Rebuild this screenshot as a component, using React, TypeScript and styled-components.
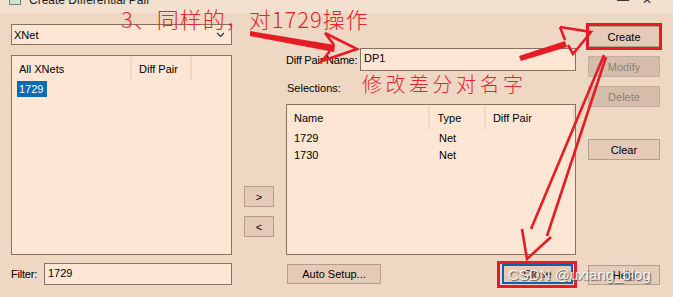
import React, { FC } from 'react'
import styled, { createGlobalStyle } from 'styled-components'

const GlobalStyle = createGlobalStyle`
  html, body {
    margin: 0;
    padding: 0;
    background: #eed8c3;
  }
  body {
    font-family: "Liberation Sans", Arial, sans-serif;
    font-size: 11px;
    color: #000;
  }
`;

const Window = styled.div`
  position: relative;
  width: 673px;
  height: 297px;
  overflow: hidden;
  background: #eed8c3;
`;

const TitleBar = styled.div`
  height: 13px;
  overflow: hidden;
  background: #f3e0cf;
`;

const TitleInner = styled.div`
  height: 22px;
  margin-top: -11px;
  display: flex;
  align-items: center;
  padding-left: 9px;
  font-size: 12px;
  color: #222;
`;

const TitleIcon = styled.span`
  width: 12px;
  height: 10px;
  border: 1px solid #6a8a6a;
  background: #cfe3cf;
  box-sizing: border-box;
  margin-right: 8px;
`;

const TitleText = styled.span`
  flex: 1;
`;

const TitleCtl = styled.span<{ $w: number }>`
  width: ${p => p.$w}px;
  text-align: center;
  font-size: 12px;
  color: #333;
`;

const Body = styled.div`
  display: flex;
  height: 284px;
  box-sizing: border-box;
  padding: 11px 0 12px 11px;
`;

const LeftCol = styled.div`
  width: 221px;
  display: flex;
  flex-direction: column;
`;

const MidCol = styled.div`
  width: 30px;
  margin-left: 12px;
  padding-top: 162px;
  display: flex;
  flex-direction: column;
  gap: 9px;
`;

const RightCol = styled.div`
  width: 290px;
  margin-left: 12px;
  display: flex;
  flex-direction: column;
`;

const ButtonCol = styled.div`
  width: 72px;
  margin-left: 12px;
  display: flex;
  flex-direction: column;
`;

const Combo = styled.div`
  height: 21px;
  box-sizing: border-box;
  border: 1px solid #857262;
  background: #fde6d3;
  display: flex;
  align-items: center;
  padding: 0 6px 0 2px;
`;

const ComboText = styled.span`
  flex: 1;
`;

const ListBox = styled.div<{ $h: number }>`
  height: ${p => p.$h}px;
  box-sizing: border-box;
  border: 1px solid #857262;
  background: #fde6d3;
  overflow: hidden;
`;

const ListHeader = styled.div`
  display: flex;
  height: 24px;
  align-items: stretch;
`;

const HeaderCell = styled.div<{ $w?: number }>`
  ${p => (p.$w ? `width: ${p.$w}px;` : 'flex: 1;')}
  box-sizing: border-box;
  padding-left: 7px;
  display: flex;
  align-items: center;
  border-right: 2px solid #ecd7c4;
  margin: 1px 0 0;
  white-space: nowrap;
`;

const ListRow = styled.div`
  display: flex;
  height: 17px;
  align-items: center;
`;

const RowCell = styled.div<{ $w?: number }>`
  ${p => (p.$w ? `width: ${p.$w}px;` : 'flex: 1;')}
  box-sizing: border-box;
  padding-left: 7px;
`;

const Selected = styled.span`
  display: inline-block;
  margin-left: -2px;
  padding: 2px 4px 2px 2px;
  background: #0a6cb4;
  color: #fff;
`;

const FieldRow = styled.div<{ $mt: number }>`
  display: flex;
  align-items: center;
  margin-top: ${p => p.$mt}px;
`;

const Label = styled.span<{ $w: number }>`
  width: ${p => p.$w}px;
  flex: none;
  white-space: nowrap;
  letter-spacing: -0.2px;
`;

const Field = styled.div<{ $h: number }>`
  flex: 1;
  height: ${p => p.$h}px;
  box-sizing: border-box;
  border: 1px solid #857262;
  background: #fde6d3;
  padding: 2px 3px 0;
  line-height: 15px;
`;

const SectionLabel = styled.div`
  margin-top: 11px;
  height: 13px;
  line-height: 13px;
  padding-left: 1px;
`;

const BottomRow = styled.div`
  display: flex;
  margin-top: 9px;
  padding-left: 1px;
`;

const Button = styled.button<{ $w?: number; $mt?: number; $focus?: boolean }>`
  width: ${p => p.$w ?? 72}px;
  height: ${p => (p.$w === 30 ? 21 : 20)}px;
  margin: ${p => p.$mt ?? 0}px 0 0;
  padding: 0;
  box-sizing: border-box;
  border: ${p => (p.$focus ? '2px solid #0a63b0' : '1px solid #b19e8e')};
  background: #e5cbb7;
  font-family: "Liberation Sans", Arial, sans-serif;
  font-size: 11px;
  font-weight: 400;
  color: #000;
  display: flex;
  align-items: center;
  justify-content: center;
  &:disabled {
    background: #d6bdab;
    border-color: #c4ae9d;
    color: #8d7d71;
  }
`;

const SideButton = styled(Button)`
  height: 21px;
`;

const CloseWrap = styled.div`
  margin-left: auto;
  margin-right: 3px;
`;

const Overlay = styled.div`
  position: absolute;
  inset: 0;
  pointer-events: none;
`;

const Note = styled.span<{ $x: number; $y: number; $size: number; $ls: number }>`
  position: absolute;
  left: ${p => p.$x}px;
  top: ${p => p.$y}px;
  font-family: "Noto Sans CJK SC", "Noto Sans", sans-serif;
  font-weight: 300;
  font-size: ${p => p.$size}px;
  letter-spacing: ${p => p.$ls}px;
  line-height: 1;
  color: #e8232b;
  white-space: nowrap;
`;

const Watermark = styled.span`
  position: absolute;
  left: 508px;
  top: 266px;
  font-family: "Liberation Sans", Arial, sans-serif;
  font-size: 15px;
  color: rgba(255, 255, 255, 0.88);
  text-shadow: 1px 1px 1px #5a5a5a;
  white-space: nowrap;
`;

const Chevron: FC = () => (
  <svg width="9" height="6" viewBox="0 0 9 6">
    <path d="M1 1 L4.5 4.5 L8 1" fill="none" stroke="#333" strokeWidth="1.2" />
  </svg>
)

const Arrows: FC = () => (
  <svg width="673" height="297" viewBox="0 0 673 297" style={{ position: 'absolute', left: 0, top: 0 }}>
    <g fill="none" stroke="#e51c24" strokeWidth="2.6" strokeLinejoin="miter">
      {/* to name field */}
      <polygon points="250,31 250,36 334,52 335,45" fill="#e51c24" stroke="none" />
      <path d="M325 33 L357 49 L322 61 L330 51 M325 33 L334 45" />
      {/* to Create */}
      <polygon points="519,56 521,61 567,47 565,41" fill="#e51c24" stroke="none" />
      <path d="M560 27 L591 32 L573 54 L568 45 M560 27 L565 40" />
      {/* Create down to Close */}
      <path d="M604 55 L531 229 M606 57 L547 236" />
      <path d="M522 229 L527 259 L551 237" />
      {/* highlight boxes */}
      <rect x="587.5" y="24.5" width="73" height="24" strokeWidth="3" />
      <rect x="498.5" y="262.5" width="77" height="24" strokeWidth="3" />
    </g>
  </svg>
)

const App: FC = () => {
  return (
    <Window>
      <GlobalStyle />
      <TitleBar>
        <TitleInner>
          <TitleIcon />
          <TitleText>Create Differential Pair</TitleText>
          <TitleCtl $w={20}>—</TitleCtl>
          <TitleCtl $w={28}>✕</TitleCtl>
          <TitleCtl $w={12}> </TitleCtl>
        </TitleInner>
      </TitleBar>
      <Body>
        <LeftCol>
          <Combo>
            <ComboText>XNet</ComboText>
            <Chevron />
          </Combo>
          <div style={{ height: 10 }} />
          <ListBox $h={200}>
            <ListHeader>
              <HeaderCell $w={120}>All XNets</HeaderCell>
              <HeaderCell $w={60}>Diff Pair</HeaderCell>
            </ListHeader>
            <ListRow>
              <RowCell $w={120}>
                <Selected>1729</Selected>
              </RowCell>
            </ListRow>
          </ListBox>
          <FieldRow $mt={8}>
            <Label $w={33}>Filter:</Label>
            <Field $h={22}>1729</Field>
          </FieldRow>
        </LeftCol>

        <MidCol>
          <Button $w={30}>&gt;</Button>
          <Button $w={30}>&lt;</Button>
        </MidCol>

        <RightCol>
          <FieldRow $mt={24}>
            <Label $w={74}>Diff Pair Name:</Label>
            <Field $h={23}>DP1</Field>
          </FieldRow>
          <SectionLabel>Selections:</SectionLabel>
          <div style={{ height: 9 }} />
          <ListBox $h={151}>
            <ListHeader>
              <HeaderCell $w={145}>Name</HeaderCell>
              <HeaderCell $w={56}>Type</HeaderCell>
              <HeaderCell $w={90}>Diff Pair</HeaderCell>
            </ListHeader>
            <ListRow>
              <RowCell $w={145}>1729</RowCell>
              <RowCell $w={56}>Net</RowCell>
            </ListRow>
            <ListRow>
              <RowCell $w={145}>1730</RowCell>
              <RowCell $w={56}>Net</RowCell>
            </ListRow>
          </ListBox>
          <BottomRow>
            <Button $w={94}>Auto Setup...</Button>
            <CloseWrap>
              <Button $w={71} $focus>Close</Button>
            </CloseWrap>
          </BottomRow>
        </RightCol>

        <ButtonCol>
          <SideButton $mt={2}>Create</SideButton>
          <SideButton $mt={9} disabled>Modify</SideButton>
          <SideButton $mt={9} disabled>Delete</SideButton>
          <SideButton $mt={32}>Clear</SideButton>
          <div style={{ flex: 1 }} />
          <Button>Help</Button>
        </ButtonCol>
      </Body>

      <Overlay>
        <Arrows />
        <Note $x={121} $y={7} $size={22} $ls={1}>3、同样的，对1729操作</Note>
        <Note $x={362} $y={74} $size={20} $ls={3.5}>修改差分对名字</Note>
        <Watermark>CSDN @uxiang_blog</Watermark>
      </Overlay>
    </Window>
  )
}

export default App
